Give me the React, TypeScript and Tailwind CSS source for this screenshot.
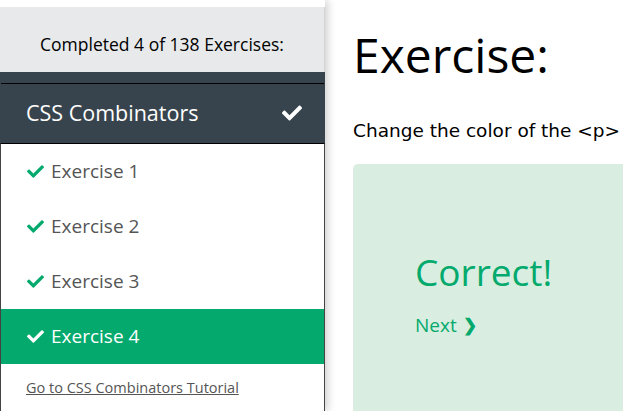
import { FaCheck } from "react-icons/fa";

const exercises = [
  { id: 1, label: "Exercise 1", active: false },
  { id: 2, label: "Exercise 2", active: false },
  { id: 3, label: "Exercise 3", active: false },
  { id: 4, label: "Exercise 4", active: true },
];

const seg = { fontFamily: '"Open Sans", "Noto Sans", sans-serif' };
const verdana = { fontFamily: '"DejaVu Sans", Verdana, sans-serif' };

export default function App() {
  return (
    <div className="flex h-[411px] w-[623px] overflow-hidden bg-white" style={seg}>
      <aside className="relative z-10 flex w-[325px] shrink-0 flex-col shadow-[3px_0_8px_rgba(0,0,0,0.18)]">
        <div className="h-[7px] bg-white" />
        <div className="flex h-[65px] items-center justify-center border-r border-[#d0d2d4] bg-[#e7e9eb] pt-[10px] text-[17.5px] text-black">
          Completed 4 of 138 Exercises:
        </div>
        <div className="h-[71px] bg-[#38444d] pt-[11px]">
          <div className="mx-[1px] flex h-[59px] items-center justify-between border-t border-black pl-[25px] pr-[22px] text-white">
            <span className="text-[21.5px]">CSS Combinators</span>
            <FaCheck className="h-[20px] w-[20px]" />
          </div>
        </div>
        <div className="flex flex-1 flex-col border-x border-t border-x-[#444] border-t-black bg-white">
          {exercises.map((ex) => (
            <div
              key={ex.id}
              className={
                ex.active
                  ? "flex h-[55px] items-center gap-[7px] bg-[#04aa6d] pl-[26px] text-white"
                  : "flex h-[55px] items-center gap-[7px] pl-[26px] text-[#555]"
              }
            >
              <FaCheck className={ex.active ? "h-[17px] w-[17px] text-white" : "h-[17px] w-[17px] text-[#04aa6d]"} />
              <span className="text-[19px]">{ex.label}</span>
            </div>
          ))}
          <a href="#" className="mt-[13px] pl-[25px] text-[14.5px] text-[#555] underline">
            Go to CSS Combinators Tutorial
          </a>
        </div>
      </aside>

      <main className="flex-1 pl-[28px] pt-[19px]">
        <h1 className="text-[48px] leading-[72px] text-black">Exercise:</h1>
        <p className="mt-[26px] whitespace-nowrap text-[18.5px] text-black" style={verdana}>
          Change the color of the &lt;p&gt;
        </p>
        <div className="mt-[19px] h-[300px] w-[320px] rounded-[5px] bg-[#d9eee1] pl-[62px] pt-[81px]">
          <div className="text-[37px] leading-[54px] text-[#04aa6d]">Correct!</div>
          <a href="#" className="mt-[12px] inline-flex items-center gap-[6px] text-[19px] text-[#04aa6d]">
            Next <span className="text-[17px] font-bold">❯</span>
          </a>
        </div>
      </main>
    </div>
  );
}
